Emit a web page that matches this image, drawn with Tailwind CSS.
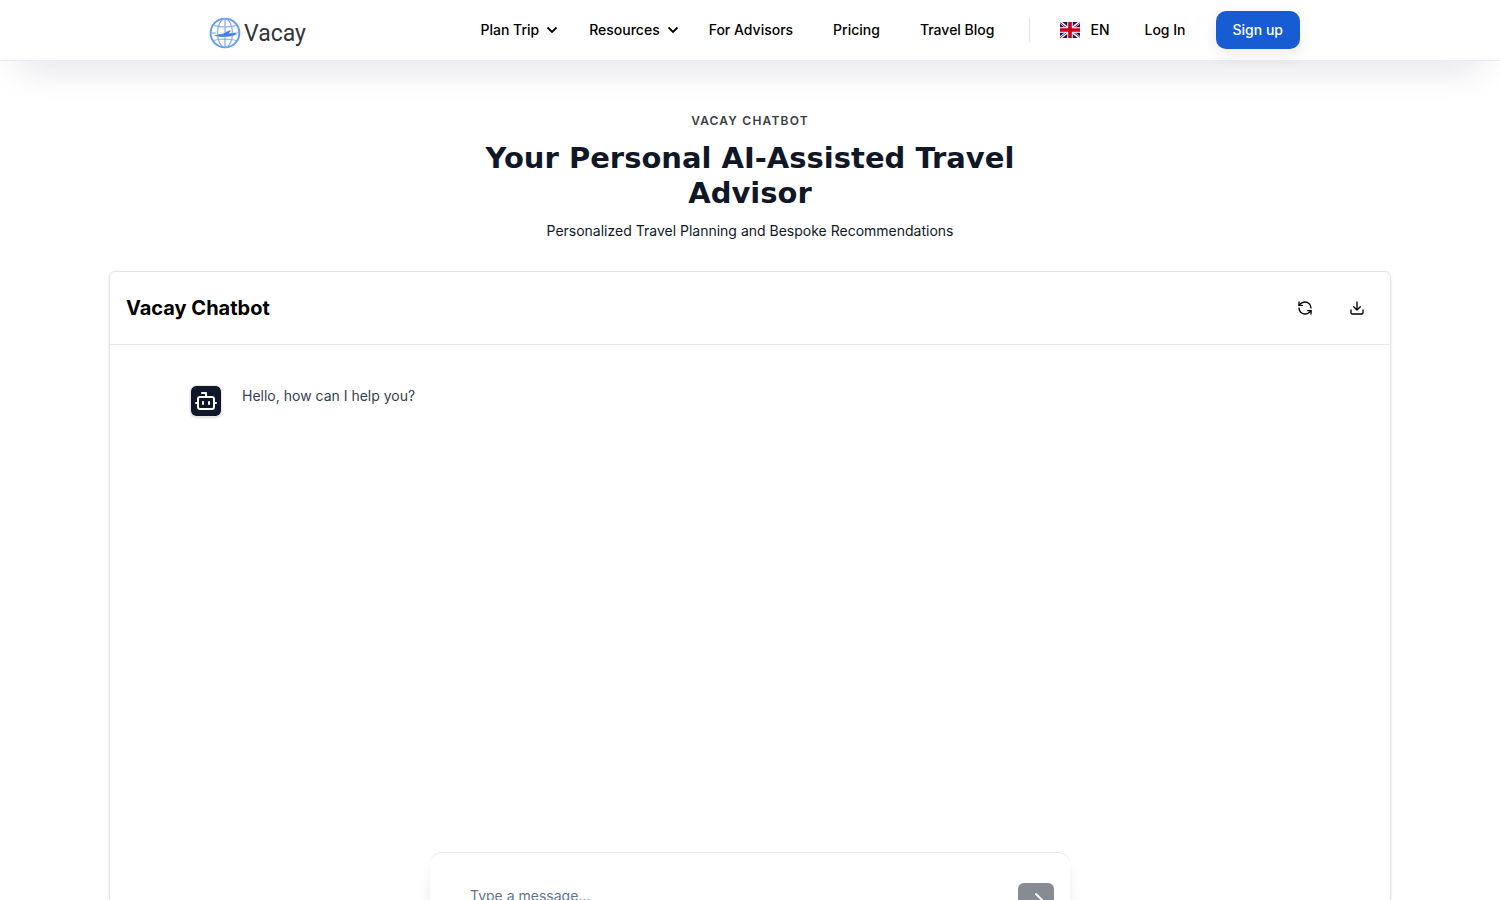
<!DOCTYPE html>
<html lang="en">
<head>
    <meta charset="UTF-8">
    <meta name="viewport" content="width=device-width, initial-scale=1.0">
    <title>Vacay Chatbot</title>
    <script src="https://cdn.jsdelivr.net/npm/@tailwindcss/browser@4"></script>
</head>
<body class="bg-white text-black h-screen overflow-hidden font-['Inter',sans-serif] text-sm">
    <!-- Navbar -->
    <header class="relative h-[61px] bg-white border-b border-[#ebebf5] shadow-[0_20px_40px_-20px_rgba(20,20,60,0.22)]">
        <div class="max-w-[1100px] h-[60px] mx-auto flex items-center justify-between">
            <a href="#" class="flex items-center gap-[3px] ml-[9px] mt-[5px]" aria-label="Vacay home">
                <svg class="size-8" viewBox="0 0 32 32" fill="none" stroke="#7fabf5" stroke-width="1.2">
                    <circle cx="16" cy="16" r="14.400" stroke="#6299f3" stroke-width="1.900"/>
                    <ellipse cx="16" cy="16" rx="7.500" ry="14.200"/>
                    <path d="M16 2v28M4.500 8.500q11.500 3 23 0M2 16h5M26 16h4M4.500 23.500q11.500-3 23 0"/>
                    <path d="M4.500 18.800c2.500-1.200 5.500-1.900 9-2.100l6.500-3.400 2.400.1-2.400 2.800 5-.5c3-.2 3.700 1.200 1.500 2.200-2.500 1.300-7.500 2.100-12 2.100-4 0-7.300-.2-10-1.200z" fill="#3f7fe8" stroke="white" stroke-width=".4"/>
                </svg>
                <span class="pt-[3px] font-['Roboto',sans-serif] text-[23px] leading-8 text-[#33353b]">Vacay</span>
            </a>
            <nav class="flex items-center font-medium">
                <button class="flex items-center gap-[7px] mr-[31px]">Plan Trip
                    <svg class="w-3 h-3" viewBox="0 0 12 12" fill="none" stroke="currentColor" stroke-width="1.800"><path d="M1.500 3.500 6 8l4.500-4.500"/></svg>
                </button>
                <button class="flex items-center gap-[7px] mr-[30px]">Resources
                    <svg class="w-3 h-3" viewBox="0 0 12 12" fill="none" stroke="currentColor" stroke-width="1.800"><path d="M1.500 3.500 6 8l4.500-4.500"/></svg>
                </button>
                <a href="#" class="mr-10">For Advisors</a>
                <a href="#" class="mr-10">Pricing</a>
                <a href="#" class="mr-[35px]">Travel Blog</a>
                <button class="flex items-center gap-[10px] h-6 border-l border-[#e4e4ea] pl-[30px] mr-[35px]">
                    <svg class="w-5 h-4" viewBox="0 0 20 16">
                        <path fill="#0a1a70" d="M0 0h20v16H0z"/>
                        <path stroke="#fff" stroke-width="2.800" d="M0 0l20 16M20 0L0 16"/>
                        <path stroke="#c4001a" stroke-width="1" d="M0 .6 8 7M20 .6 12 7M0 15.800 8 9.400M20 15.400 12 9"/>
                        <path stroke="#fff" stroke-width="5.400" d="M10 0v16M0 8h20"/>
                        <path stroke="#c4001a" stroke-width="3.600" d="M10 0v16M0 8h20"/>
                    </svg>
                    EN
                </button>
                <a href="#" class="mr-[30px]">Log In</a>
                <a href="#" class="h-[38px] px-[17px] flex items-center rounded-[10px] bg-[#175cd3] text-white shadow-[0_6px_16px_rgba(20,20,60,0.08)]">Sign up</a>
            </nav>
        </div>
    </header>

    <main>
        <!-- Intro -->
        <section class="max-w-[600px] mx-auto pt-[50px] text-center text-[#101828]">
            <p class="text-xs leading-5 font-semibold tracking-widest text-[#3a3d42]">VACAY CHATBOT</p>
            <h1 class="mt-[10px] font-['DejaVu_Sans',sans-serif] font-bold text-[29px] leading-[35px]">Your Personal AI-Assisted Travel Advisor</h1>
            <p class="mt-[10px]">Personalized Travel Planning and Bespoke Recommendations</p>
        </section>

        <!-- Chat card -->
        <section class="max-w-[1282px] mx-auto mt-[30px] border border-gray-200 rounded-md shadow-sm">
            <div class="h-[73px] px-4 flex items-center justify-between border-b border-gray-200">
                <h2 class="text-xl font-bold">Vacay Chatbot</h2>
                <div class="flex gap-4 -mr-px">
                    <button class="size-9 flex items-center justify-center" aria-label="Restart chat">
                        <svg class="size-4" viewBox="0 0 24 24" fill="none" stroke="currentColor" stroke-width="2" stroke-linecap="round" stroke-linejoin="round">
                            <path d="M21 12a9 9 0 0 0-9-9 9.750 9.750 0 0 0-6.740 2.740L3 8"/>
                            <path d="M3 3v5h5M3 12a9 9 0 0 0 9 9 9.750 9.750 0 0 0 6.740-2.740L21 16"/>
                            <path d="M16 16h5v5"/>
                        </svg>
                    </button>
                    <button class="size-9 flex items-center justify-center" aria-label="Download chat">
                        <svg class="size-4" viewBox="0 0 24 24" fill="none" stroke="currentColor" stroke-width="2" stroke-linecap="round" stroke-linejoin="round">
                            <path d="M21 15v4a2 2 0 0 1-2 2H5a2 2 0 0 1-2-2v-4"/>
                            <path d="m7 10 5 5 5-5M12 15V3"/>
                        </svg>
                    </button>
                </div>
            </div>

            <div class="h-[507px] px-20 pt-10">
                <div class="flex items-start gap-5">
                    <div class="size-8 flex items-center justify-center rounded-md border border-gray-200 bg-[#0f172a] bg-clip-padding text-white shadow-sm">
                        <svg class="size-6" viewBox="0 0 24 24" fill="none" stroke="currentColor" stroke-width="2" stroke-linecap="round" stroke-linejoin="round">
                            <path d="M12 8V4H8"/>
                            <rect x="4" y="8" width="16" height="12" rx="2"/>
                            <path d="M2 14h2M20 14h2M15 13v2M9 13v2"/>
                        </svg>
                    </div>
                    <p class="leading-[22px] text-[#374151]">Hello, how can I help you?</p>
                </div>
            </div>

            <!-- Composer -->
            <form class="max-w-[640px] mx-auto p-4 pt-[30px] flex items-start rounded-t-xl border-t border-gray-200 shadow-lg">
                <input type="text" aria-label="Message" placeholder="Type a message..." class="flex-1 h-6 pl-6 outline-none placeholder:text-slate-500">
                <button class="size-9 flex items-center justify-center rounded-md bg-[#878b94] text-white" aria-label="Send message">
                    <svg class="size-6" viewBox="0 0 24 24" fill="none" stroke="currentColor" stroke-width="2" stroke-linecap="round" stroke-linejoin="round"><path d="M5 12h14M12 5l7 7-7 7"/></svg>
                </button>
            </form>
        </section>
    </main>
</body>
</html>
